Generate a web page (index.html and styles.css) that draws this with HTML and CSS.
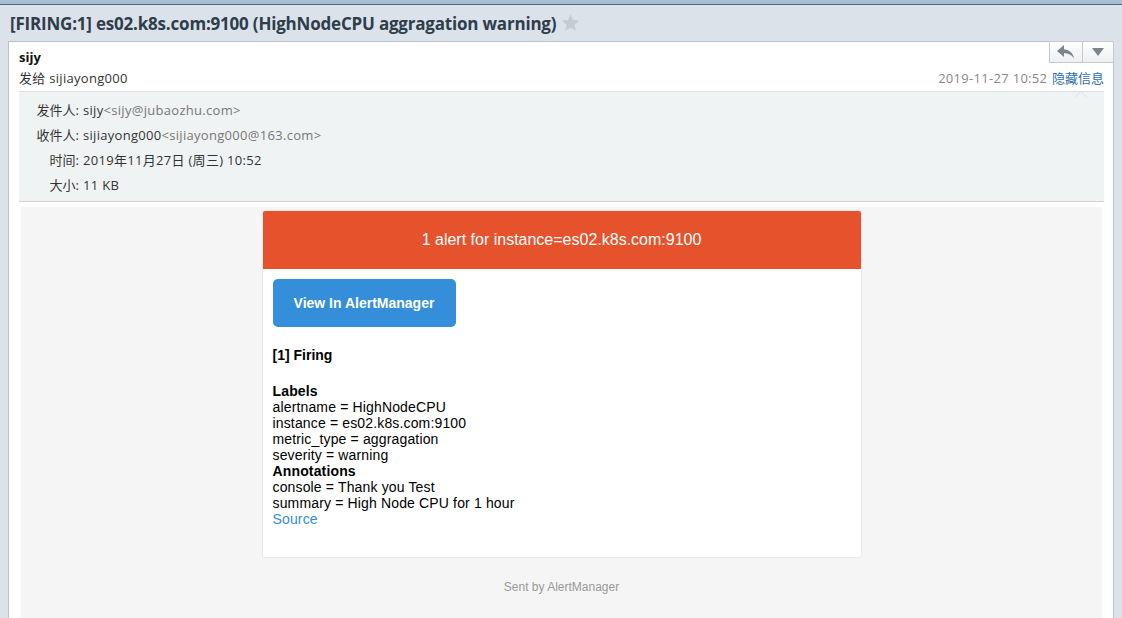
FILE: index.html
```html
<!DOCTYPE html>
<html lang="zh">
<head>
<meta charset="utf-8">
<title>[FIRING:1] es02.k8s.com:9100</title>
<link rel="stylesheet" href="styles.css">
</head>
<body>
<div class="topbar"></div>
<div class="subject">
  <h1 class="subject-text">[FIRING:1] es02.k8s.com:9100 (HighNodeCPU aggragation warning)</h1>
  <svg class="star" width="19" height="19" viewBox="0 0 24 24"><path d="M12 1.5l3.1 7.3 7.9.7-6 5.2 1.8 7.8L12 18.4l-6.8 4.1L7 14.7 1 9.5l7.9-.7z" fill="#c3cbd3"/></svg>
</div>
<div class="panel">
  <div class="toolbar">
    <button class="tb-btn tb-reply" aria-label="回复">
      <svg width="18" height="14" viewBox="0 0 18 14"><path d="M7 0L0 6l7 6V8.3c4.5 0 7.5 1.4 10 5.2C16.2 8.5 13 5 7 4.3z" fill="#7b8590"/></svg>
    </button>
    <button class="tb-btn tb-more" aria-label="更多">
      <svg width="12" height="8" viewBox="0 0 12 8"><path d="M0 0h12L6 8z" fill="#7b8590"/></svg>
    </button>
  </div>
  <div class="head">
    <div class="head-left">
      <div class="from-name">sijy</div>
      <div class="to-line">发给 sijiayong000</div>
    </div>
    <div class="head-right">
      <span class="date">2019-11-27 10:52</span>
      <a class="toggle">隐藏信息</a>
    </div>
  </div>
  <div class="info">
    <div class="info-row"><span class="lbl">发件人:</span><span class="val">sijy<span class="addr">&lt;sijy@jubaozhu.com&gt;</span></span></div>
    <div class="info-row"><span class="lbl">收件人:</span><span class="val">sijiayong000<span class="addr">&lt;sijiayong000@163.com&gt;</span></span></div>
    <div class="info-row"><span class="lbl">时间:</span><span class="val">2019年11月27日 (周三) 10:52</span></div>
    <div class="info-row"><span class="lbl">大小:</span><span class="val">11 KB</span></div>
  </div>
  <div class="mailbody">
    <div class="card">
      <div class="card-head">1 alert for instance=es02.k8s.com:9100</div>
      <div class="card-content">
        <a class="am-btn">View In AlertManager</a>
        <div class="firing">[1] Firing</div>
        <div class="alert">
          <div class="b">Labels</div>
          <div>alertname = HighNodeCPU</div>
          <div>instance = es02.k8s.com:9100</div>
          <div>metric_type = aggragation</div>
          <div>severity = warning</div>
          <div class="b">Annotations</div>
          <div>console = Thank you Test</div>
          <div>summary = High Node CPU for 1 hour</div>
          <a class="src">Source</a>
        </div>
      </div>
    </div>
    <div class="footer">Sent by AlertManager</div>
  </div>
</div>
</body>
</html>
```
FILE: styles.css
```css
html, body {
  margin: 0;
  padding: 0;
}
body {
  background: #dce2e9;
  font-family: "Open Sans", "Noto Sans CJK SC", sans-serif;
  font-size: 13px;
  color: #333;
  overflow: hidden;
  height: 618px;
}
.topbar {
  height: 4px;
  background: #aabfd6;
  border-bottom: 1px solid #52657a;
}
.subject {
  height: 36px;
  display: flex;
  align-items: center;
  padding-left: 10px;
  gap: 5px;
}
.subject-text {
  margin: 0;
  font-size: 17px;
  font-weight: 700;
  color: #2e3d4c;
  letter-spacing: -0.2px;
}
.star {
  display: block;
  margin-top: -1px;
}
.panel {
  position: relative;
  margin: 0 8px;
  background: #fff;
  border: 1px solid #b9c1ca;
  height: 600px;
  letter-spacing: 0.3px;
}
.toolbar {
  position: absolute;
  top: -1px;
  right: -1px;
  display: flex;
}
.tb-btn {
  height: 22px;
  border: 1px solid #c3c9cf;
  background: linear-gradient(#ffffff, #eef0f2);
  padding: 0;
  display: flex;
  align-items: center;
  justify-content: center;
}
.tb-reply {
  width: 34px;
}
.tb-more {
  width: 31px;
  border-left: none;
}
.head {
  display: flex;
  justify-content: space-between;
  align-items: flex-end;
  padding: 5px 9px 2px 10px;
}
.from-name {
  font-weight: 700;
  line-height: 20px;
  color: #111;
  letter-spacing: 0;
}
.to-line {
  line-height: 22px;
  color: #333;
}
.head-right {
  line-height: 22px;
}
.date {
  color: #888;
}
.toggle {
  color: #2f6db0;
  margin-left: 1px;
  letter-spacing: 0;
}
.info {
  position: relative;
  margin: 0 9px 0 10px;
  background: #f0f3f3;
  border-top: 1px solid #dde1e1;
  border-bottom: 1px solid #cfd4d4;
  padding: 6px 0 3px;
}
.info::before {
  content: "";
  position: absolute;
  top: -7px;
  right: 17px;
  border: 6px solid transparent;
  border-bottom-color: #dde1e1;
}
.info::after {
  content: "";
  position: absolute;
  top: -5px;
  right: 18px;
  border: 5px solid transparent;
  border-bottom-color: #f0f3f3;
}
.info-row {
  display: flex;
  line-height: 25px;
}
.lbl {
  width: 60px;
  text-align: right;
  color: #333;
  letter-spacing: 0;
}
.val {
  margin-left: 4px;
  color: #333;
}
.addr {
  color: #777;
}
.mailbody {
  margin: 5px 11px 0 12px;
  background: #f5f5f5;
  padding: 3px 0 60px;
  font-family: "Liberation Sans", Arial, sans-serif;
  font-size: 14px;
  color: #000;
  letter-spacing: 0;
}
.card {
  width: 598px;
  margin: 0 auto;
  background: #fff;
  border: 1px solid #e9e9e9;
  border-radius: 3px;
  overflow: hidden;
}
.card-head {
  height: 58px;
  background: #e6522c;
  color: #fff;
  font-size: 16px;
  line-height: 58px;
  text-align: center;
}
.card-content {
  padding: 10px 10px 30px;
}
.am-btn {
  display: inline-block;
  height: 48px;
  line-height: 48px;
  width: 183px;
  text-align: center;
  background: #348eda;
  color: #fff;
  font-weight: 700;
  border-radius: 5px;
}
.firing {
  font-weight: 700;
  line-height: 16px;
  margin-top: 20px;
}
.alert {
  margin-top: 20px;
  line-height: 16px;
  letter-spacing: 0.15px;
}
.b {
  font-weight: 700;
}
.src {
  display: block;
  color: #348eda;
}
.footer {
  text-align: center;
  font-size: 12px;
  color: #999;
  margin-top: 22px;
  line-height: 14px;
}
```
